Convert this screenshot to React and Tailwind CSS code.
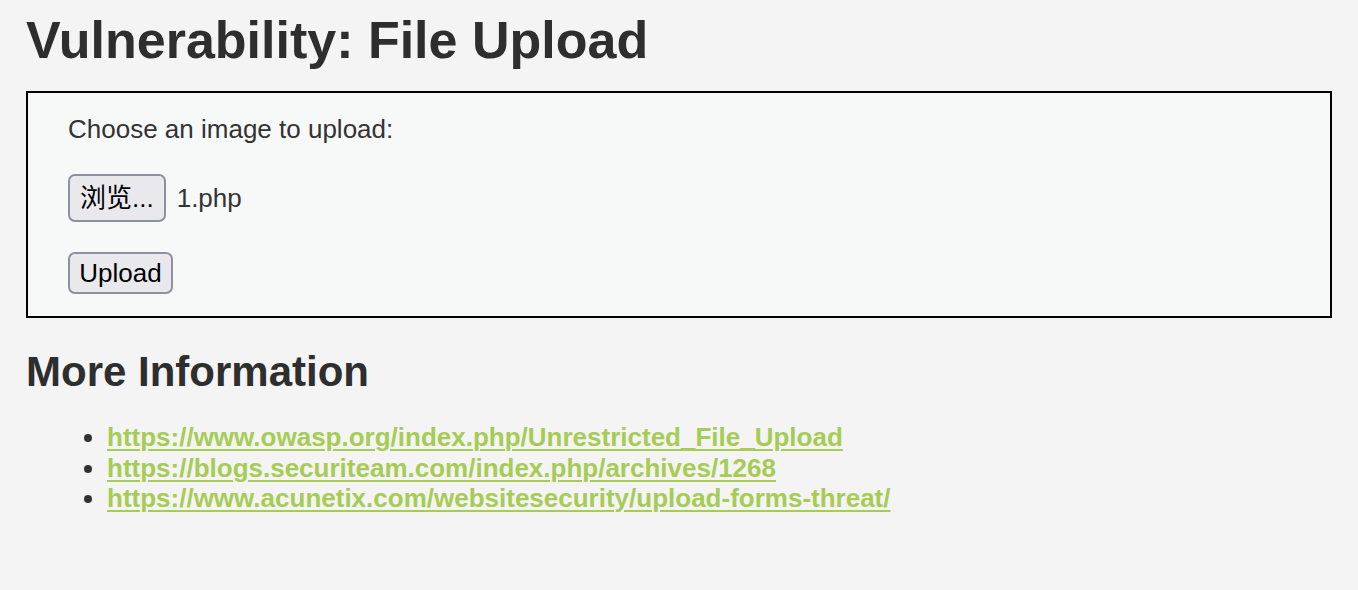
import React from 'react';

const links = [
    'https://www.owasp.org/index.php/Unrestricted_File_Upload',
    'https://blogs.securiteam.com/index.php/archives/1268',
    'https://www.acunetix.com/websitesecurity/upload-forms-threat/',
];

const App = () => {
    return (
        <div className="min-h-[590px] bg-[#f4f4f4] px-[26px] pt-[10px] text-[#333] font-['Liberation_Sans','Noto_Sans_CJK_SC',sans-serif]">
            {/* Header */}
            <h1 className="text-[52px] leading-[60px] font-bold text-[#2e2e2e]">Vulnerability: File Upload</h1>

            {/* Upload form */}
            <div className="mt-[21px] border-2 border-black bg-[#f7f8f8] px-[40px] pt-[21px] pb-[22px]">
                <p className="text-[26px] leading-[30px]">Choose an image to upload:</p>
                <div className="mt-[30px] flex items-center">
                    <button className="h-[48px] px-[10px] rounded-[7px] border-2 border-[#8f8f9d] bg-[#e9e9ed] text-[26px] text-black font-['Liberation_Sans','Noto_Sans_CJK_SC',sans-serif]">
                        浏览...
                    </button>
                    <span className="ml-[11px] text-[26px] leading-[30px]">1.php</span>
                </div>
                <button className="mt-[30px] flex items-center justify-center w-[105px] h-[42px] rounded-[7px] border-2 border-[#8f8f9d] bg-[#e9e9ed] text-[26px] text-black">
                    Upload
                </button>
            </div>

            {/* More info */}
            <h2 className="mt-[30px] text-[42px] leading-[48px] font-bold text-[#2e2e2e]">More Information</h2>
            <ul className="mt-[26px] pl-[81px] list-disc">
                {links.map(link => (
                    <li key={link} className="text-[26px] leading-[30.5px]">
                        <a href="#" className="font-bold text-[#a6cc55] underline decoration-2 underline-offset-[3px]">
                            {link}
                        </a>
                    </li>
                ))}
            </ul>
        </div>
    );
};

export default App;
